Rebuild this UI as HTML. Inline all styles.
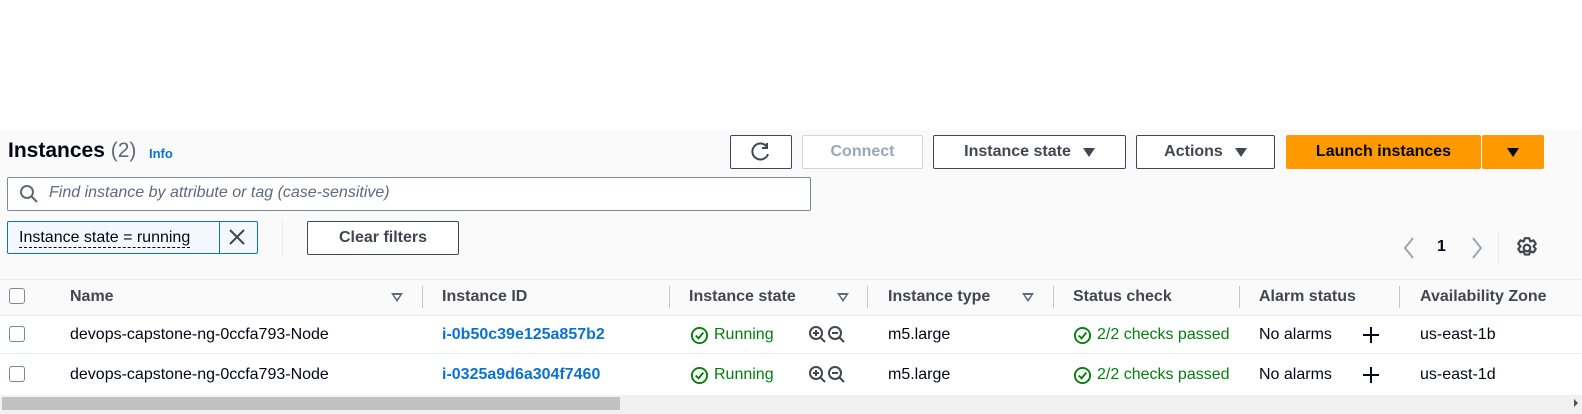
<!DOCTYPE html>
<html><head><meta charset="utf-8"><style>
*{box-sizing:border-box;margin:0;padding:0}
body{width:1582px;height:414px;background:#fff;font-family:"Liberation Sans",sans-serif;color:#000716;position:relative;overflow:hidden;font-size:16px}
.abs{position:absolute}
.panel{left:0;top:130px;width:1582px;height:284px;background:#fafafa}
.btn{position:absolute;border:1px solid #424650;border-radius:2px;background:#fff;font-weight:bold;color:#424650;font-size:16px;display:flex;align-items:center;justify-content:center;height:34px;top:135px}
.tri{display:inline-block;width:0;height:0;border-left:6px solid transparent;border-right:6px solid transparent;border-top:9px solid #424650;margin-left:12px}
.th{position:absolute;top:288px;font-weight:bold;color:#424650;font-size:16px}
.sep{position:absolute;top:286px;width:1px;height:22px;background:#c6c6cd}
.cell{position:absolute;font-size:16px;color:#000716;display:flex;align-items:center;height:20px}
.cb{position:absolute;left:9px;width:16px;height:16px;border:1.5px solid #7d8998;border-radius:3px;background:#fff}
.sort{position:absolute;top:293px;width:0;height:0;border-left:6px solid transparent;border-right:6px solid transparent;border-top:9px solid #5f6b7a}
.sort:after{content:"";position:absolute;left:-3px;top:-7px;border-left:3px solid transparent;border-right:3px solid transparent;border-top:4px solid #fff}
.link{color:#0972d3;font-weight:bold}
.ok{color:#037f0c}
</style></head><body>
<div class="abs panel"></div>
<div class="abs" style="left:8px;top:139px;font-size:21px;font-weight:bold;color:#000716">Instances <span style="font-weight:normal;color:#5f6b7a">(2)</span></div>
<div class="abs link" style="left:149px;top:146px;font-size:13px">Info</div>

<div class="btn" style="left:730px;width:62px"><svg width="22" height="22" viewBox="0 0 22 22"><path d="M17 6A8 8 0 1 0 18 13" fill="none" stroke="#424650" stroke-width="2"/><path d="M17 2V7H12" fill="none" stroke="#424650" stroke-width="2"/></svg></div>
<div class="btn" style="left:802px;width:121px;border-color:#d1d5db;color:#9ba7b6">Connect</div>
<div class="btn" style="left:933px;width:193px">Instance state<span class="tri"></span></div>
<div class="btn" style="left:1136px;width:139px">Actions<span class="tri"></span></div>
<div class="btn" style="left:1286px;width:195px;background:#ff9900;border-color:#ff9900;color:#000716">Launch instances</div>
<div class="btn" style="left:1482px;width:62px;background:#ff9900;border-color:#ff9900"><span class="tri" style="margin:0;border-top-color:#000716"></span></div>

<div class="abs" style="left:7px;top:177px;width:804px;height:34px;border:1px solid #7d8998;border-radius:2px;background:#fff"></div>
<svg class="abs" style="left:18px;top:183px" width="22" height="22" viewBox="0 0 22 22"><circle cx="9" cy="9" r="6" fill="none" stroke="#5f6b7a" stroke-width="2"/><path d="M13.5 13.5L19 19" stroke="#5f6b7a" stroke-width="2.2"/></svg>
<div class="abs" style="left:49px;top:184px;font-style:italic;color:#5f6b7a;font-size:16px">Find instance by attribute or tag (case-sensitive)</div>

<div class="abs" style="left:7px;top:221px;width:251px;height:33px;border:1px solid #0972d3;border-radius:2px;background:#f2f8fd"></div>
<div class="abs" style="left:219px;top:221px;width:1px;height:33px;background:#0972d3"></div>
<div class="abs" style="left:19px;top:229px;font-size:16px;border-bottom:1px dashed #000716;line-height:18px">Instance state = running</div>
<svg class="abs" style="left:228px;top:228px" width="18" height="18" viewBox="0 0 18 18"><path d="M2 2L16 16M16 2L2 16" stroke="#424650" stroke-width="2"/></svg>
<div class="abs" style="left:282px;top:221px;width:1px;height:34px;background:#e9ebed"></div>
<div class="btn" style="left:307px;top:221px;width:152px">Clear filters</div>

<svg class="abs" style="left:1402px;top:236px" width="14" height="24" viewBox="0 0 14 24"><path d="M11 2L3 12L11 22" fill="none" stroke="#9ba7b6" stroke-width="2"/></svg>
<div class="abs" style="left:1437px;top:238px;font-weight:bold;font-size:16px">1</div>
<svg class="abs" style="left:1470px;top:236px" width="14" height="24" viewBox="0 0 14 24"><path d="M3 2L11 12L3 22" fill="none" stroke="#9ba7b6" stroke-width="2"/></svg>
<div class="abs" style="left:1498px;top:232px;width:1px;height:32px;background:#e9ebed"></div>
<svg class="abs" style="left:1515px;top:236px" width="24" height="24" viewBox="0 0 22 22"><circle cx="11" cy="11" r="3" fill="none" stroke="#424650" stroke-width="2"/><path d="M9 2h4l1 3 3-1 2 3-2 2.5 2 2.5-2 3-3-1-1 3H9l-1-3-3 1-2-3 2-2.5L3 7l2-3 3 1z" fill="none" stroke="#424650" stroke-width="2" stroke-linejoin="round"/></svg>

<div class="abs" style="left:0;top:279px;width:1582px;height:1px;background:#e9ebed"></div>
<div class="abs" style="left:0;top:280px;width:1582px;height:35px;background:#fafafa"></div>
<div class="cb" style="top:288px"></div>
<div class="th" style="left:70px">Name</div><div class="sort" style="left:391px"></div><div class="sep" style="left:422px"></div>
<div class="th" style="left:442px">Instance ID</div><div class="sep" style="left:669px"></div>
<div class="th" style="left:689px">Instance state</div><div class="sort" style="left:837px"></div><div class="sep" style="left:867px"></div>
<div class="th" style="left:888px">Instance type</div><div class="sort" style="left:1022px"></div><div class="sep" style="left:1053px"></div>
<div class="th" style="left:1073px">Status check</div><div class="sep" style="left:1239px"></div>
<div class="th" style="left:1259px">Alarm status</div><div class="sep" style="left:1399px"></div>
<div class="th" style="left:1420px">Availability Zone</div>
<div class="abs" style="left:0;top:315px;width:1582px;height:80px;background:#fff"></div>
<div class="abs" style="left:0;top:315px;width:1582px;height:1px;background:#e9ebed"></div>
<div class="abs" style="left:0;top:353px;width:1582px;height:1px;background:#e9ebed"></div>

<div class="cb" style="top:326px"></div>
<div class="cell" style="left:70px;top:325px">devops-capstone-ng-0ccfa793-Node</div>
<div class="cell link" style="left:442px;top:325px">i-0b50c39e125a857b2</div>
<div class="cell ok" style="left:690px;top:325px"><svg width="19" height="19" viewBox="0 0 20 20" style="margin-right:5px"><circle cx="10" cy="10" r="8" fill="none" stroke="#037f0c" stroke-width="2"/><path d="M6 10l3 3 5-6" fill="none" stroke="#037f0c" stroke-width="2"/></svg>Running</div>
<div class="cell" style="left:808px;top:325px"><svg width="40" height="20" viewBox="0 0 40 20"><circle cx="8" cy="8" r="6" fill="none" stroke="#424650" stroke-width="2"/><path d="M12.5 12.5L17 17M5 8h6M8 5v6" stroke="#424650" stroke-width="2"/><circle cx="27" cy="8" r="6" fill="none" stroke="#424650" stroke-width="2"/><path d="M31.5 12.5L36 17M24 8h6" stroke="#424650" stroke-width="2"/></svg></div>
<div class="cell" style="left:888px;top:325px">m5.large</div>
<div class="cell ok" style="left:1073px;top:325px"><svg width="19" height="19" viewBox="0 0 20 20" style="margin-right:5px"><circle cx="10" cy="10" r="8" fill="none" stroke="#037f0c" stroke-width="2"/><path d="M6 10l3 3 5-6" fill="none" stroke="#037f0c" stroke-width="2"/></svg>2/2 checks passed</div>
<div class="cell" style="left:1259px;top:325px">No alarms</div>
<svg class="abs" style="left:1362px;top:326px" width="18" height="18" viewBox="0 0 18 18"><path d="M9 1v16M1 9h16" stroke="#000716" stroke-width="2"/></svg>
<div class="cell" style="left:1420px;top:325px">us-east-1b</div>

<div class="cb" style="top:366px"></div>
<div class="cell" style="left:70px;top:365px">devops-capstone-ng-0ccfa793-Node</div>
<div class="cell link" style="left:442px;top:365px">i-0325a9d6a304f7460</div>
<div class="cell ok" style="left:690px;top:365px"><svg width="19" height="19" viewBox="0 0 20 20" style="margin-right:5px"><circle cx="10" cy="10" r="8" fill="none" stroke="#037f0c" stroke-width="2"/><path d="M6 10l3 3 5-6" fill="none" stroke="#037f0c" stroke-width="2"/></svg>Running</div>
<div class="cell" style="left:808px;top:365px"><svg width="40" height="20" viewBox="0 0 40 20"><circle cx="8" cy="8" r="6" fill="none" stroke="#424650" stroke-width="2"/><path d="M12.5 12.5L17 17M5 8h6M8 5v6" stroke="#424650" stroke-width="2"/><circle cx="27" cy="8" r="6" fill="none" stroke="#424650" stroke-width="2"/><path d="M31.5 12.5L36 17M24 8h6" stroke="#424650" stroke-width="2"/></svg></div>
<div class="cell" style="left:888px;top:365px">m5.large</div>
<div class="cell ok" style="left:1073px;top:365px"><svg width="19" height="19" viewBox="0 0 20 20" style="margin-right:5px"><circle cx="10" cy="10" r="8" fill="none" stroke="#037f0c" stroke-width="2"/><path d="M6 10l3 3 5-6" fill="none" stroke="#037f0c" stroke-width="2"/></svg>2/2 checks passed</div>
<div class="cell" style="left:1259px;top:365px">No alarms</div>
<svg class="abs" style="left:1362px;top:366px" width="18" height="18" viewBox="0 0 18 18"><path d="M9 1v16M1 9h16" stroke="#000716" stroke-width="2"/></svg>
<div class="cell" style="left:1420px;top:365px">us-east-1d</div>

<div class="abs" style="left:0;top:395px;width:1582px;height:19px;background:#f1f1f1"></div>
<div class="abs" style="left:2px;top:397px;width:618px;height:13px;background:#c1c1c1"></div>
<div class="abs" style="left:1574px;top:399px;border-top:4px solid transparent;border-bottom:4px solid transparent;border-left:4px solid #505050"></div>
</body></html>
